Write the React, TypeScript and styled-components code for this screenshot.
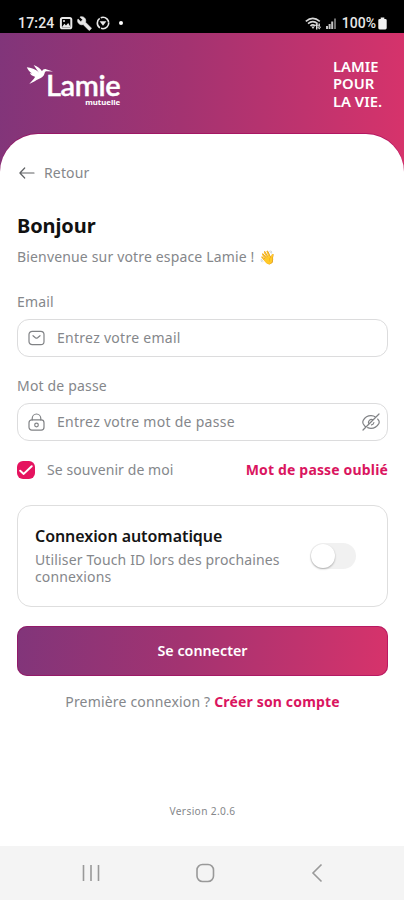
import React from 'react';
import styled, { createGlobalStyle } from 'styled-components';

const GlobalStyle = createGlobalStyle`
  * { box-sizing: border-box; }
  body { margin: 0; background: #fff; }
  button, input { font: inherit; letter-spacing: inherit; }
`;

const brandColors = '#81357a 0%, #a33371 45%, #bf336e 75%, #d7336b 100%';

const Screen = styled.div`
  display: flex;
  flex-direction: column;
  width: 404px;
  height: 900px;
  overflow: hidden;
  font-family: 'Noto Sans', 'Open Sans', sans-serif;
  font-size: 14px;
  line-height: 20px;
  color: #85878b;
  background: #fff;
`;

const StatusBar = styled.div`
  display: flex;
  justify-content: space-between;
  flex: none;
  height: 33px;
  padding: 14px 17px 0 18px;
  background: #000;
  color: #e8e8e8;
  font-family: Roboto, sans-serif;
  font-weight: 500;
  line-height: 18px;
`;

const StatusGroup = styled.div<{ $gap: number }>`
  display: flex;
  align-items: center;
  height: 18px;
  gap: ${(p) => p.$gap}px;
`;

const Clock = styled.span`
  letter-spacing: 0.2px;
`;

const Percent = styled.span`
  margin: 0 -1px 0 2px;
`;

const Dot = styled.span`
  width: 4px;
  height: 4px;
  margin-left: 5px;
  border-radius: 50%;
  background: #fff;
`;

const Header = styled.header`
  display: flex;
  justify-content: space-between;
  align-items: flex-start;
  flex: none;
  height: 139px;
  margin-bottom: -38px;
  padding: 25px 21px 0 26px;
  background: linear-gradient(94deg, ${brandColors});
  color: #fff;
`;

const Logo = styled.div`
  display: flex;
  padding-top: 6px;
`;

const LogoText = styled.div`
  display: flex;
  flex-direction: column;
  align-items: flex-end;
  margin: 5px 0 0 -8px;
`;

const LogoName = styled.span`
  font-family: Lato, sans-serif;
  font-size: 29px;
  font-weight: 600;
  line-height: 32px;
  letter-spacing: -0.4px;
  -webkit-text-stroke: 0.4px #fff;
`;

const LogoSub = styled.span`
  margin-top: -3px;
  font-size: 7.800px;
  font-weight: 700;
  line-height: 8px;
`;

const Slogan = styled.div`
  width: 50px;
  font-size: 14.8px;
  font-weight: 600;
  line-height: 17.3px;
  white-space: nowrap;
`;

const Sheet = styled.main`
  display: flex;
  flex-direction: column;
  flex: 1;
  padding: 29px 16px 0 17px;
  border-radius: 38px 38px 0 0;
  background: #fff;
  box-shadow: 0 -1px 0 rgba(160, 0, 90, 0.55);
`;

const BackLink = styled.div`
  display: flex;
  align-items: center;
  gap: 9px;
  padding-left: 2px;
  letter-spacing: 0.15px;
`;

const Title = styled.h1`
  margin: 29px 0 0;
  font-size: 20px;
  font-weight: 700;
  line-height: 28px;
  letter-spacing: -0.1px;
  color: #111;
`;

const Welcome = styled.p`
  display: flex;
  margin: 7px 0 0;
  letter-spacing: 0.16px;
`;

const Wave = styled.span`
  margin-left: 4px;
  font-size: 13.500px;
`;

const Field = styled.label<{ $top: number }>`
  display: flex;
  flex-direction: column;
  gap: 7px;
  margin-top: ${(p) => p.$top}px;
  letter-spacing: 0.18px;
`;

const InputBox = styled.div`
  display: flex;
  align-items: center;
  height: 38px;
  padding: 0 7px 0 10px;
  border: 1px solid #dcdcdd;
  border-radius: 12px;
  letter-spacing: 0.28px;
`;

const Input = styled.input`
  flex: 1;
  min-width: 0;
  margin-left: 12px;
  padding: 0;
  border: 0;
  outline: 0;
  background: none;
  &::placeholder { color: #85878b; opacity: 1; }
`;

const OptionsRow = styled.div`
  display: flex;
  align-items: center;
  justify-content: space-between;
  margin-top: 19px;
`;

const Remember = styled.div`
  display: flex;
  align-items: center;
  gap: 12px;
  letter-spacing: 0.08px;
`;

const Checkbox = styled.span`
  display: flex;
  align-items: center;
  justify-content: center;
  width: 18px;
  height: 18px;
  border-radius: 6px;
  background: #e5135f;
`;

const PinkLink = styled.a`
  color: #da1560;
  font-weight: 700;
  letter-spacing: 0.16px;
`;

const Card = styled.section`
  display: flex;
  justify-content: space-between;
  height: 102px;
  margin-top: 25px;
  padding: 19px 31px 0 17px;
  border: 1px solid #dedede;
  border-radius: 14px;
`;

const CardTitle = styled.h2`
  margin: 0;
  font-size: 16px;
  font-weight: 600;
  line-height: 22px;
  letter-spacing: -0.06px;
  color: #151515;
`;

const CardText = styled.p`
  width: 256px;
  margin: 4px 0 0;
  line-height: 17.4px;
  letter-spacing: 0.14px;
`;

const Switch = styled.span`
  width: 46px;
  height: 26px;
  margin-top: 18px;
  border-radius: 13px;
  background: #f1f1f1;
`;

const Knob = styled.span`
  display: block;
  width: 24px;
  height: 24px;
  margin: 1px;
  border-radius: 50%;
  background: #fff;
  box-shadow: 0 1px 2px rgba(0, 0, 0, 0.3);
`;

const SubmitButton = styled.button`
  height: 50px;
  margin-top: 18.500px;
  padding: 0;
  border: 0;
  border-radius: 10px;
  background: linear-gradient(97deg, ${brandColors});
  box-shadow: inset 0 0 0 1px rgba(160, 0, 90, 0.5);
  color: #fff;
  font-size: 14.3px;
  font-weight: 600;
`;

const SignUp = styled.p`
  margin: 16.500px 0 0;
  text-align: center;
  letter-spacing: 0.18px;
`;

const Version = styled.p`
  margin: 92px 0 0;
  font-size: 10.2px;
  line-height: 14px;
  letter-spacing: 0.35px;
  text-align: center;
`;

const NavBar = styled.nav`
  display: flex;
  align-items: center;
  justify-content: space-between;
  flex: none;
  height: 54px;
  padding: 0 78px 0 79px;
  background: #f4f4f4;
`;

const line = { fill: 'none', stroke: '#808285', strokeWidth: 1.2, strokeLinecap: 'round', strokeLinejoin: 'round' } as const;

const PictureIcon = () => (
  <svg width="14" height="14" viewBox="0 0 14 14">
    <rect x="1.9" y="1.9" width="10.4" height="10.4" rx="1.6" fill="none" stroke="#e8e8e8" strokeWidth="2" />
    <path d="M3 11l2.4-3.2 1.6 1.6L9.2 7l2.3 4z" fill="#e8e8e8" />
    <circle cx="5" cy="5" r="1" fill="#e8e8e8" />
  </svg>
);

const WrenchIcon = () => (
  <svg width="15" height="15" viewBox="0 0 24 24">
    <path fill="#e8e8e8" stroke="#e8e8e8" d="M22.7 19l-9.1-9.1c.9-2.3.4-5-1.5-6.9-2-2-5-2.4-7.4-1.3L9 6 6 9 1.6 4.7C.4 7.1.9 10.1 2.9 12.1c1.900 1.900 4.600 2.400 6.900 1.500l9.100 9.100c.4.4 1 .4 1.400 0l2.300-2.300c.5-.4.5-1.100.1-1.400z" />
  </svg>
);

const CircleIcon = () => (
  <svg width="14" height="14" viewBox="0 0 14 14">
    <circle cx="7" cy="7" r="5.7" fill="none" stroke="#e8e8e8" strokeWidth="1.6" strokeDasharray="10.8 1.1" />
    <path d="M3.600 5.200h6.800L7 9.800z" fill="#e8e8e8" />
  </svg>
);

const WifiIcon = () => (
  <svg width="17" height="13" viewBox="0 0 17 13">
    <g fill="none" stroke="#d8d8d8" strokeWidth="1.6">
      <path d="M.8 4.300q7-5.800 14 0" />
      <path d="M3 6.700q4.800-4 9.600 0" />
      <path d="M5.400 9q2.400-2.200 4.800 0" />
    </g>
    <path d="M6.300 9.500L8 12l1.700-2.500z" fill="#d8d8d8" />
    <path d="M9.600 8.800l2.100-2.600 2 2.600zM12.200 9.800l2 2.800 2-2.800zM11 8.500h1.400v4H11zM13.500 6.500h1.400v4h-1.400z" fill="#ddd" />
  </svg>
);

const SignalIcon = () => (
  <svg width="12" height="12" viewBox="0 0 12 12">
    <path d="M1 9h2v3H1zM3.600 7h2v5h-2zM6.200 4.500h2V12h-2z" fill="#c4c4c4" />
    <path d="M9 1.500h2V12H9z" fill="#707070" />
  </svg>
);

const BatteryIcon = () => (
  <svg width="9" height="13" viewBox="0 0 9 13">
    <path d="M2.700.5h3.600v1.400h1q1.400 0 1.400 1.400v7.800q0 1.400-1.400 1.400H1.700Q.3 12.500.3 11.100V3.300q0-1.400 1.400-1.400h1z" fill="#f0f0f0" />
  </svg>
);

const Bird = () => (
  <svg width="28" height="22" viewBox="0 0 28 22">
    <path fill="#fff" d="M.8 3.300C5 4 9.600 4.700 13 8.800L7.600.9c4 1.600 7.200 3.800 8.400 6.300.8-1.700 2.400-2.400 4-2L27 7.500l-6.800-.2c-.8 0-1.300.8-1.500 1.800-.8 3.300-2.900 4.700-6 5.900-1.500.6-2.700 1.300-4 2.200L3.200 20l4.500-4.900c.8-.9 1.200-1.700 1.300-2.400-2.900-.7-4.400-2-5.100-3.600l2.200.4C3.600 7.800 1.800 6 .8 3.300z" />
  </svg>
);

const BackArrow = () => (
  <svg width="16" height="12" viewBox="0 0 16 12">
    <path {...line} stroke="#606265" d="M15 6H1M5.700 1L.9 6l4.800 5" />
  </svg>
);

const MailIcon = () => (
  <svg width="17" height="16" viewBox="0 0 17 16">
    <rect {...line} x="1" y="1.3" width="15" height="13.4" rx="3.2" />
    <path {...line} d="M5 5.700l2.400 2.100q1.100.8 2.200 0L12 5.700" />
  </svg>
);

const LockIcon = () => (
  <svg width="17" height="18" viewBox="0 0 17 18">
    <path {...line} d="M4.200 7V5.500a4.300 4.500 0 0 1 8.600 0V7" />
    <rect {...line} x="1" y="6.900" width="15" height="10.200" rx="2.800" />
    <circle {...line} cx="8.500" cy="12" r="1.800" />
  </svg>
);

const EyeOffIcon = () => (
  <svg width="18" height="18" viewBox="0 0 18 18">
    <path {...line} d="M3.900 14.200C2.800 13.200 1.900 12 1.200 10.700q-.8-1.700 0-3.300C3 4.400 5.800 2.700 9 2.700c1.700 0 3.400.5 4.800 1.500M15.700 6.100l1.100 1.500q.8 1.500 0 3C15 13.600 12.200 15.300 9 15.300c-1.200 0-2.300-.2-3.300-.7M7 11a2.900 2.900 0 0 1 4-4M11.900 9.500a2.900 2.900 0 0 1-2.400 2.400M17 1L1 17" />
  </svg>
);

const CheckIcon = () => (
  <svg width="14" height="12" viewBox="0 0 14 12">
    <path d="M1.200 6.700l3.500 3.200 8-7.700" fill="none" stroke="#fff" strokeWidth="2" strokeLinecap="round" strokeLinejoin="round" />
  </svg>
);

const navLine = { fill: 'none', stroke: '#999', strokeWidth: 1.6 };

export default function App() {
  return (
    <>
      <GlobalStyle />
      <Screen>
        <StatusBar>
          <StatusGroup $gap={4}>
            <Clock>17:24</Clock>
            <PictureIcon />
            <WrenchIcon />
            <CircleIcon />
            <Dot />
          </StatusGroup>
          <StatusGroup $gap={3}>
            <WifiIcon />
            <SignalIcon />
            <Percent>100%</Percent>
            <BatteryIcon />
          </StatusGroup>
        </StatusBar>
        <Header>
          <Logo>
            <Bird />
            <LogoText>
              <LogoName>Lamie</LogoName>
              <LogoSub>mutuelle</LogoSub>
            </LogoText>
          </Logo>
          <Slogan>
            LAMIE
            <br />
            POUR
            <br />
            LA VIE.
          </Slogan>
        </Header>
        <Sheet>
          <BackLink>
            <BackArrow />
            Retour
          </BackLink>
          <Title>Bonjour</Title>
          <Welcome>
            Bienvenue sur votre espace Lamie !<Wave>👋</Wave>
          </Welcome>
          <Field $top={25}>
            Email
            <InputBox>
              <MailIcon />
              <Input type="email" placeholder="Entrez votre email" />
            </InputBox>
          </Field>
          <Field $top={19}>
            Mot de passe
            <InputBox>
              <LockIcon />
              <Input type="password" placeholder="Entrez votre mot de passe" />
              <EyeOffIcon />
            </InputBox>
          </Field>
          <OptionsRow>
            <Remember>
              <Checkbox>
                <CheckIcon />
              </Checkbox>
              Se souvenir de moi
            </Remember>
            <PinkLink>Mot de passe oublié</PinkLink>
          </OptionsRow>
          <Card>
            <div>
              <CardTitle>Connexion automatique</CardTitle>
              <CardText>Utiliser Touch ID lors des prochaines connexions</CardText>
            </div>
            <Switch>
              <Knob />
            </Switch>
          </Card>
          <SubmitButton>Se connecter</SubmitButton>
          <SignUp>
            Première connexion ? <PinkLink>Créer son compte</PinkLink>
          </SignUp>
          <Version>Version 2.0.6</Version>
        </Sheet>
        <NavBar>
          <svg width="24" height="20" viewBox="0 0 24 20">
            <path {...navLine} d="M4.500 2v16M12 2v16M19.500 2v16" />
          </svg>
          <svg width="20" height="20" viewBox="0 0 20 20">
            <rect {...navLine} x="1" y="1.500" width="16.500" height="17" rx="5.500" />
          </svg>
          <svg width="18" height="20" viewBox="0 0 18 20">
            <path {...navLine} d="M13.500 1.500L5 10l8.500 8.500" />
          </svg>
        </NavBar>
      </Screen>
    </>
  );
}
